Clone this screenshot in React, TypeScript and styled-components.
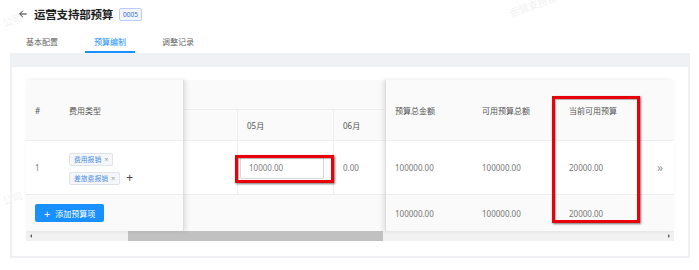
import React from 'react';
import styled, { createGlobalStyle } from 'styled-components';

const GlobalStyle = createGlobalStyle`
  html, body {
    margin: 0;
    padding: 0;
    background: #ffffff;
  }
  body {
    font-family: "Noto Sans", "Noto Sans CJK SC", sans-serif;
    color: #555;
  }
`;

const Page = styled.div`
  position: relative;
  width: 699px;
  height: 270px;
  overflow: hidden;
  background: #fff;
`;

// 水印 (faint)
const Watermark = styled.div<{ $x: number; $y: number }>`
  position: absolute;
  left: ${(p) => p.$x}px;
  top: ${(p) => p.$y}px;
  font-size: 10px;
  color: #f1f1f1;
  transform: rotate(-20deg);
  white-space: nowrap;
  pointer-events: none;
`;

const Header = styled.div`
  display: flex;
  align-items: center;
  height: 16px;
  padding: 6px 0 0 18px;
`;

const Back = styled.svg`
  width: 10px;
  height: 10px;
  margin-right: 6px;
`;

const Title = styled.div`
  font-size: 11.5px;
  font-weight: 700;
  color: #1f1f1f;
  letter-spacing: -0.2px;
`;

const Badge = styled.span`
  margin-left: 6px;
  height: 11px;
  padding: 0 3px;
  font-size: 6.5px;
  line-height: 11px;
  color: #3b6fd8;
  background: #f0f5ff;
  border: 1px solid #b9cdf7;
  border-radius: 2px;
`;

const Tabs = styled.div`
  display: flex;
  gap: 18px;
  padding: 8px 0 0 17px;
`;

const Tab = styled.div<{ $active?: boolean }>`
  width: 50px;
  height: 23px;
  box-sizing: border-box;
  display: flex;
  align-items: center;
  justify-content: center;
  font-size: 8px;
  color: ${(p) => (p.$active ? '#1890ff' : '#666')};
  border-bottom: 2px solid ${(p) => (p.$active ? '#1890ff' : 'transparent')};
  padding-top: 2px;
`;

const Panel = styled.div`
  margin: 0 9px 0 10px;
  padding: 14px 2px 2px;
  background: #f0f1f4;
`;

const Card = styled.div`
  background: #fff;
  padding: 13px 14px 15px;
`;

const Table = styled.div`
  display: flex;
  width: 648px;
  font-size: 8px;
  color: #666;
`;

const Section = styled.div<{ $cols: string }>`
  display: grid;
  grid-template-columns: ${(p) => p.$cols};
  grid-template-rows: 30px 31px 54px 36px;
  position: relative;
`;

const LeftFixed = styled(Section)`
  z-index: 2;
  border-right: 1px solid #dedede;
  box-shadow: 2px 0 4px rgba(0, 0, 0, 0.1);
`;

const RightFixed = styled(Section)`
  z-index: 2;
  border-left: 1px solid #dedede;
  box-shadow: -2px 0 4px rgba(0, 0, 0, 0.1);
`;

const Middle = styled(Section)`
  overflow: hidden;
`;

const Cell = styled.div<{ $head?: boolean; $span?: number; $rows?: number; $sum?: boolean; $vline?: boolean }>`
  display: flex;
  align-items: center;
  padding: 0 9px;
  box-sizing: border-box;
  white-space: nowrap;
  background: ${(p) => (p.$head || p.$sum ? '#fafafa' : '#fff')};
  color: ${(p) => (p.$head ? '#555' : '#777')};
  border-bottom: ${(p) => (p.$sum ? 'none' : '1px solid #eeeeee')};
  border-left: ${(p) => (p.$vline ? '1px solid #eeeeee' : 'none')};
  ${(p) => (p.$span ? `grid-column: span ${p.$span};` : '')}
  ${(p) => (p.$rows ? `grid-row: span ${p.$rows};` : '')}
`;

const More = styled(Cell)`
  font-size: 12px;
  color: #999;
  padding-left: 11px;
`;

const TagList = styled.div`
  display: flex;
  flex-direction: column;
  gap: 6px;
  padding-top: 2px;
`;

const TagRow = styled.div`
  display: flex;
  align-items: center;
  gap: 6px;
`;

const Tag = styled.span`
  display: inline-flex;
  align-items: center;
  gap: 3px;
  height: 13px;
  padding: 0 4px;
  box-sizing: border-box;
  font-size: 6.8px;
  color: #4a8fe0;
  background: #f4f6f9;
  border: 1px solid #dfe3ea;
  border-radius: 2px;
  i {
    font-style: normal;
    color: #999;
    font-size: 7.5px;
  }
`;

const Plus = styled.span`
  font-size: 12px;
  color: #444;
  line-height: 1;
`;

const Input = styled.div`
  width: 92px;
  height: 23px;
  margin-left: -7px;
  padding-left: 8px;
  box-sizing: border-box;
  display: flex;
  align-items: center;
  border: 1px solid #d9d9d9;
  border-radius: 2px;
  color: #808080;
`;

const AddButton = styled.button`
  display: flex;
  align-items: center;
  gap: 5px;
  height: 18px;
  padding: 0 9px 0 9px;
  border: none;
  border-radius: 2px;
  background: #1890ff;
  color: #fff;
  font-family: inherit;
  font-size: 8px;
  span {
    font-size: 11px;
    line-height: 1;
  }
`;

const Scrollbar = styled.div`
  display: flex;
  align-items: center;
  width: 648px;
  height: 10px;
  background: #f1f1f1;
`;

const Arrow = styled.span<{ $dir: 'l' | 'r' }>`
  width: 0;
  height: 0;
  margin: 0 4px;
  border-top: 2px solid transparent;
  border-bottom: 2px solid transparent;
  ${(p) => (p.$dir === 'l' ? 'border-right: 2px solid #666;' : 'border-left: 2px solid #666;')}
`;

const Track = styled.div`
  flex: 1;
  height: 100%;
  display: flex;
`;

const Thumb = styled.div`
  margin-left: 92px;
  width: 255px;
  height: 100%;
  background: #c1c1c1;
`;

const Mark = styled.div<{ $x: number; $y: number; $w: number; $h: number }>`
  position: absolute;
  left: ${(p) => p.$x}px;
  top: ${(p) => p.$y}px;
  width: ${(p) => p.$w}px;
  height: ${(p) => p.$h}px;
  box-sizing: border-box;
  border: 3px solid #e8000b;
  box-shadow: 1px 1px 2px rgba(0, 0, 0, 0.55), inset 1px 1px 1px rgba(0, 0, 0, 0.3);
  z-index: 5;
`;

const App: React.FC = () => (
  <Page>
    <GlobalStyle />
    <Watermark $x={2} $y={12}>公司</Watermark>
    <Watermark $x={2} $y={190}>公司</Watermark>
    <Watermark $x={508} $y={-3}>运营支持部</Watermark>
    <Header>
      <Back viewBox="0 0 24 24" fill="none" stroke="#333" strokeWidth="2.4" strokeLinecap="round" strokeLinejoin="round">
        <path d="M20 12H4M11 5l-7 7 7 7" />
      </Back>
      <Title>运营支持部预算</Title>
      <Badge>0005</Badge>
    </Header>
    <Tabs>
      <Tab>基本配置</Tab>
      <Tab $active>预算编制</Tab>
      <Tab>调整记录</Tab>
    </Tabs>
    <Panel>
      <Card>
        <Table>
          <LeftFixed $cols="34px 123px">
            <Cell $head $rows={2}>#</Cell>
            <Cell $head $rows={2}>费用类型</Cell>
            <Cell>1</Cell>
            <Cell>
              <TagList>
                <TagRow>
                  <Tag>费用报销<i>×</i></Tag>
                </TagRow>
                <TagRow>
                  <Tag>差旅费报销<i>×</i></Tag>
                  <Plus>+</Plus>
                </TagRow>
              </TagList>
            </Cell>
            <Cell $sum $span={2}>
              <AddButton>
                <span>+</span>添加预算项
              </AddButton>
            </Cell>
          </LeftFixed>
          <Middle $cols="53px 96px 53px">
            <Cell $head $span={3} />
            <Cell $head />
            <Cell $head $vline>05月</Cell>
            <Cell $head $vline>06月</Cell>
            <Cell />
            <Cell $vline>
              <Input>10000.00</Input>
            </Cell>
            <Cell $vline>0.00</Cell>
            <Cell $sum $span={3} />
          </Middle>
          <RightFixed $cols="87px 87px 86px 28px">
            <Cell $head $rows={2}>预算总金额</Cell>
            <Cell $head $rows={2}>可用预算总额</Cell>
            <Cell $head $rows={2}>当前可用预算</Cell>
            <Cell $head $rows={2} />
            <Cell>100000.00</Cell>
            <Cell>100000.00</Cell>
            <Cell>20000.00</Cell>
            <More>»</More>
            <Cell $sum>100000.00</Cell>
            <Cell $sum>100000.00</Cell>
            <Cell $sum>20000.00</Cell>
            <Cell $sum />
          </RightFixed>
        </Table>
        <Scrollbar>
          <Arrow $dir="l" />
          <Track>
            <Thumb />
          </Track>
          <Arrow $dir="r" />
        </Scrollbar>
      </Card>
    </Panel>
    <Mark $x={235} $y={155} $w={99} $h={28} />
    <Mark $x={552} $y={96} $w={88} $h={127} />
  </Page>
);

export default App;
